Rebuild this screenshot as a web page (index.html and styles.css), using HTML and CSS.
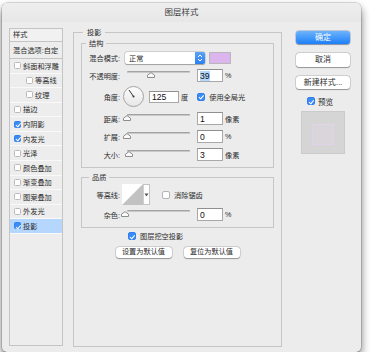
FILE: index.html
```html
<!DOCTYPE html>
<html lang="zh-CN">
<head>
    <meta charset="UTF-8">
    <meta name="viewport" content="width=device-width, initial-scale=1.0">
    <title>图层样式</title>
    <link rel="stylesheet" href="styles.css">
</head>
<body>
    <div class="window">
        <div class="titlebar">图层样式</div>
        <div class="content">
            <!-- style list -->
            <div class="style-list">
                <div class="list-head">样式</div>
                <div class="list-blend">混合选项:自定</div>
                <div class="list-item"><span class="box"></span>斜面和浮雕</div>
                <div class="list-item sub"><span class="box"></span>等高线</div>
                <div class="list-item sub"><span class="box"></span>纹理</div>
                <div class="list-item"><span class="box"></span>描边</div>
                <div class="list-item"><span class="box on"></span>内阴影</div>
                <div class="list-item"><span class="box on"></span>内发光</div>
                <div class="list-item"><span class="box"></span>光泽</div>
                <div class="list-item"><span class="box"></span>颜色叠加</div>
                <div class="list-item"><span class="box"></span>渐变叠加</div>
                <div class="list-item"><span class="box"></span>图案叠加</div>
                <div class="list-item"><span class="box"></span>外发光</div>
                <div class="list-item selected"><span class="box on"></span>投影</div>
            </div>

            <!-- drop shadow settings -->
            <fieldset class="group main-group">
                <legend>投影</legend>
                <fieldset class="group structure">
                    <legend>结构</legend>
                    <div class="row row-blend">
                        <span class="lbl">混合模式:</span>
                        <div class="select">
                            <span class="select-value">正常</span>
                            <span class="select-arrows">
                                <svg width="10" height="12" viewBox="0 0 10 12"><path d="M3 5 L5 3 L7 5 M3 7 L5 9 L7 7" fill="none" stroke="#fff" stroke-width="1"/></svg>
                            </span>
                        </div>
                        <span class="swatch"></span>
                    </div>
                    <div class="row">
                        <span class="lbl">不透明度:</span>
                        <div class="slider">
                            <span class="track"></span>
                            <svg class="thumb" style="left: 38%" width="8" height="6" viewBox="0 0 8 6"><path d="M0.5 5.5 V3.2 L4 0.6 L7.5 3.2 V5.5 Z" fill="#fafafa" stroke="#8c8c8c"/></svg>
                        </div>
                        <div class="field"><span class="sel">39</span></div>
                        <span class="unit">%</span>
                    </div>
                    <div class="row row-angle">
                        <span class="lbl">角度:</span>
                        <svg class="dial" width="21" height="21" viewBox="0 0 21 21">
                            <defs>
                                <linearGradient id="dialFill" x1="0" y1="0" x2="0" y2="1">
                                    <stop offset="0" stop-color="#fdfdfd"/>
                                    <stop offset="1" stop-color="#e6e6e6"/>
                                </linearGradient>
                            </defs>
                            <circle cx="10.5" cy="10.5" r="10" fill="url(#dialFill)" stroke="#a2a2a2"/>
                            <line x1="10.5" y1="10.5" x2="6" y2="4" stroke="#333" stroke-width="1"/>
                            <circle cx="10.5" cy="10.5" r="1" fill="#333"/>
                        </svg>
                        <div class="field wide">125</div>
                        <span class="unit">度</span>
                        <span class="check on global"></span>
                        <span class="check-text">使用全局光</span>
                    </div>
                    <div class="row">
                        <span class="lbl">距离:</span>
                        <div class="slider">
                            <span class="track"></span>
                            <svg class="thumb" style="left: 0%" width="8" height="6" viewBox="0 0 8 6"><path d="M0.5 5.5 V3.2 L4 0.6 L7.5 3.2 V5.5 Z" fill="#fafafa" stroke="#8c8c8c"/></svg>
                        </div>
                        <div class="field">1</div>
                        <span class="unit">像素</span>
                    </div>
                    <div class="row">
                        <span class="lbl">扩展:</span>
                        <div class="slider">
                            <span class="track"></span>
                            <svg class="thumb" style="left: 0%" width="8" height="6" viewBox="0 0 8 6"><path d="M0.5 5.5 V3.2 L4 0.6 L7.5 3.2 V5.5 Z" fill="#fafafa" stroke="#8c8c8c"/></svg>
                        </div>
                        <div class="field">0</div>
                        <span class="unit">%</span>
                    </div>
                    <div class="row">
                        <span class="lbl">大小:</span>
                        <div class="slider">
                            <span class="track"></span>
                            <svg class="thumb" style="left: 3%" width="8" height="6" viewBox="0 0 8 6"><path d="M0.5 5.5 V3.2 L4 0.6 L7.5 3.2 V5.5 Z" fill="#fafafa" stroke="#8c8c8c"/></svg>
                        </div>
                        <div class="field">3</div>
                        <span class="unit">像素</span>
                    </div>
                </fieldset>

                <fieldset class="group quality">
                    <legend>品质</legend>
                    <div class="row row-contour">
                        <span class="lbl">等高线:</span>
                        <div class="contour">
                            <svg width="21" height="21" viewBox="0 0 21 21"><rect width="21" height="21" fill="#fff"/><path d="M0 21 L21 0 V21 Z" fill="#c2c2c2"/></svg>
                            <span class="contour-arrow">
                                <svg width="5" height="4" viewBox="0 0 5 4"><path d="M0.5 0.5 H4.5 L2.5 3.5 Z" fill="#555"/></svg>
                            </span>
                        </div>
                        <span class="check antialias"></span>
                        <span class="check-text">消除锯齿</span>
                    </div>
                    <div class="row">
                        <span class="lbl">杂色:</span>
                        <div class="slider">
                            <span class="track"></span>
                            <svg class="thumb" style="left: -3%" width="8" height="6" viewBox="0 0 8 6"><path d="M0.5 5.5 V3.2 L4 0.6 L7.5 3.2 V5.5 Z" fill="#fafafa" stroke="#8c8c8c"/></svg>
                        </div>
                        <div class="field">0</div>
                        <span class="unit">%</span>
                    </div>
                </fieldset>

                <div class="knockout">
                    <span class="check on"></span>
                    <span class="check-text">图层挖空投影</span>
                </div>
                <div class="defaults">
                    <button class="btn small">设置为默认值</button>
                    <button class="btn small">复位为默认值</button>
                </div>
            </fieldset>

            <!-- dialog buttons -->
            <div class="actions">
                <button class="btn big primary">确定</button>
                <button class="btn big">取消</button>
                <button class="btn big">新建样式...</button>
                <div class="preview-toggle">
                    <span class="check on"></span>
                    <span class="check-text">预览</span>
                </div>
                <div class="preview">
                    <div class="preview-inner"></div>
                </div>
            </div>
        </div>
    </div>
</body>
</html>
```

FILE: styles.css
```css
* {
    box-sizing: border-box;
}
body {
    margin: 0;
    background: #fff;
    font-family: "Liberation Sans", "Noto Sans CJK SC", sans-serif;
    font-size: 7.2px;
    color: #2b2b2b;
}
.window {
    width: 359px;
    height: 349px;
    margin: 3px 0 0 2px;
    background: #ececec;
    border-radius: 5px;
    box-shadow: 0 0 0 0.5px rgba(0,0,0,0.25), 0 5px 10px rgba(0,0,0,0.55);
}
.titlebar {
    height: 19px;
    line-height: 19px;
    text-align: center;
    font-size: 8.5px;
    color: #3c3c3c;
    border-radius: 5px 5px 0 0;
    background: linear-gradient(#eeeeee, #e7e7e7);
}
.content {
    display: flex;
    align-items: flex-start;
    padding-left: 7px;
}

/* style list */
.style-list {
    width: 54px;
    height: 318px;
    margin-top: 6px;
    border: 1px solid #c4c4c4;
    background: #ededed;
}
.list-head {
    height: 13px;
    line-height: 12px;
    padding-left: 3px;
    border-bottom: 1px solid #c4c4c4;
    background: #f1f1f1;
}
.list-blend {
    height: 17px;
    line-height: 17px;
    padding-left: 3px;
    border-bottom: 1px solid #c4c4c4;
}
.list-item {
    height: 14.57px;
    display: flex;
    align-items: center;
    padding-left: 4px;
    border-bottom: 1px solid #f9f9f9;
}
.list-item.sub {
    padding-left: 16px;
}
.list-item.selected {
    background: #b5d6fd;
}
.box {
    width: 7px;
    height: 7px;
    margin-right: 2px;
    border: 1px solid #b9b9b9;
    border-radius: 1.5px;
    background: #fff;
    position: relative;
}
.box.on,
.check.on {
    border-color: #2f80ee;
    background: #3b8cf4;
}
.box.on::after,
.check.on::after {
    content: "";
    position: absolute;
    left: 1.8px;
    top: 0.3px;
    width: 1.6px;
    height: 3.6px;
    border-right: 1.1px solid #fff;
    border-bottom: 1.1px solid #fff;
    transform: rotate(40deg);
}

/* groups */
.group {
    margin: 0;
    padding: 0;
    min-width: 0;
    border: 1px solid #c6c6c6;
}
.group legend {
    padding: 0 4px;
    line-height: 11px;
    font-size: 7.2px;
}
.main-group {
    width: 209px;
    height: 320px;
    margin: 5px 0 0 10px;
    padding: 0 7px;
}
.main-group > legend {
    margin-left: 2px;
}
.structure {
    padding: 3px 0 6px;
}
.structure > legend {
    margin-left: 4px;
    padding: 0 3px;
}
.quality {
    margin-top: 4px;
    padding: 1px 0 6px;
}
.quality > legend {
    margin-left: 7px;
    padding: 0 3px;
}
.row {
    display: flex;
    align-items: center;
    height: 13px;
    margin-top: 5px;
}
.row:first-of-type {
    margin-top: 0;
}
.row-blend {
    height: 12px;
}
.row-angle {
    height: 21px;
    margin-top: 4px;
}
.row-contour {
    height: 21px;
}
.quality .row + .row {
    margin-top: 3px;
}
.lbl {
    width: 38px;
    text-align: right;
    flex-shrink: 0;
}

/* controls */
.select {
    width: 80px;
    height: 12px;
    margin-left: 5px;
    display: flex;
    align-items: center;
    background: #fff;
    border-radius: 2px;
    box-shadow: 0 0 0 0.5px rgba(0,0,0,0.2), 0 0.5px 1px rgba(0,0,0,0.25);
}
.select-value {
    flex: 1;
    padding-left: 4px;
}
.select-arrows {
    width: 10px;
    height: 12px;
    border-radius: 0 2px 2px 0;
    background: linear-gradient(#5aa3f8, #2b7ff2);
}
.select-arrows svg {
    display: block;
}
.swatch {
    width: 22px;
    height: 12px;
    margin-left: 4px;
    background: #dcb4ee;
    border: 1px solid #b8b8b8;
}
.slider {
    position: relative;
    width: 63px;
    height: 13px;
    margin-left: 7px;
    align-self: flex-start;
}
.track {
    display: block;
    margin-top: 2px;
    height: 2px;
    border-radius: 1px;
    background: #a3a3a3;
    border-bottom: 1px solid #c9c9c9;
}
.thumb {
    position: absolute;
    top: 3px;
    margin-left: -4px;
}
.field {
    width: 26px;
    height: 13px;
    margin-left: 7px;
    padding-left: 2px;
    line-height: 12px;
    font-size: 8.6px;
    color: #111;
    background: #fff;
    border: 1px solid #a8a8a8;
    border-top-color: #8f8f8f;
}
.field.wide {
    width: 30px;
    height: 12px;
    line-height: 11px;
    margin-left: 5px;
}
.sel {
    background: #b3d7ff;
}
.unit {
    margin-left: 2px;
}
.dial {
    margin-left: 3px;
}
.check {
    position: relative;
    width: 8px;
    height: 8px;
    border: 1px solid #b4b4b4;
    border-radius: 2px;
    background: #fff;
}
.check.on::after {
    left: 2.2px;
    top: 0.6px;
}
.check-text {
    margin-left: 4px;
}
.check.global {
    margin-left: 9px;
}
.contour {
    display: flex;
    margin-left: 2px;
    border: 1px solid #c4c4c4;
    background: #fff;
    height: 21px;
}
.contour svg {
    display: block;
}
.contour > svg {
    margin: -1px 0 0 -1px;
}
.contour-arrow {
    width: 6px;
    display: flex;
    align-items: center;
    justify-content: center;
    border-left: 1px solid #d0d0d0;
}
.check.antialias {
    margin-left: 12px;
}
.knockout {
    display: flex;
    align-items: center;
    height: 8px;
    margin-top: 4px;
    padding-left: 47px;
}
.defaults {
    display: flex;
    justify-content: center;
    gap: 12px;
    margin-top: 7px;
}

/* buttons */
.btn {
    display: block;
    margin: 0;
    padding: 0;
    border: none;
    font-family: inherit;
    color: #2b2b2b;
    background: #fff;
    border-radius: 3px;
    box-shadow: 0 0 0 0.5px rgba(0,0,0,0.2), 0 0.5px 1px rgba(0,0,0,0.3);
}
.btn.small {
    width: 56px;
    height: 10.5px;
    line-height: 10.5px;
    font-size: 7.2px;
}
.btn.big {
    width: 54px;
    height: 13.3px;
    line-height: 13.3px;
    font-size: 8px;
    margin-bottom: 9.3px;
}
.btn.primary {
    color: #fff;
    background: linear-gradient(#6db4fb, #1d7ff8);
    box-shadow: 0 0 0 0.5px rgba(0,60,160,0.35), 0 0.5px 1px rgba(0,0,0,0.3);
}

/* right column */
.actions {
    width: 54px;
    margin: 8.7px 0 0 14px;
}
.preview-toggle {
    display: flex;
    align-items: center;
    height: 8px;
    margin: -1px 0 0 11px;
}
.preview-toggle .check-text {
    font-size: 7.6px;
    margin-left: 3px;
}
.preview {
    width: 44px;
    height: 43px;
    margin: 6px 0 0 5px;
    padding: 12px 0 0 10px;
    background: #d5d5d5;
    border: 1px solid #cbcbcb;
}
.preview-inner {
    width: 22px;
    height: 21px;
    background: #d9d6db;
    border: 1px solid #e2d2ea;
}
```
